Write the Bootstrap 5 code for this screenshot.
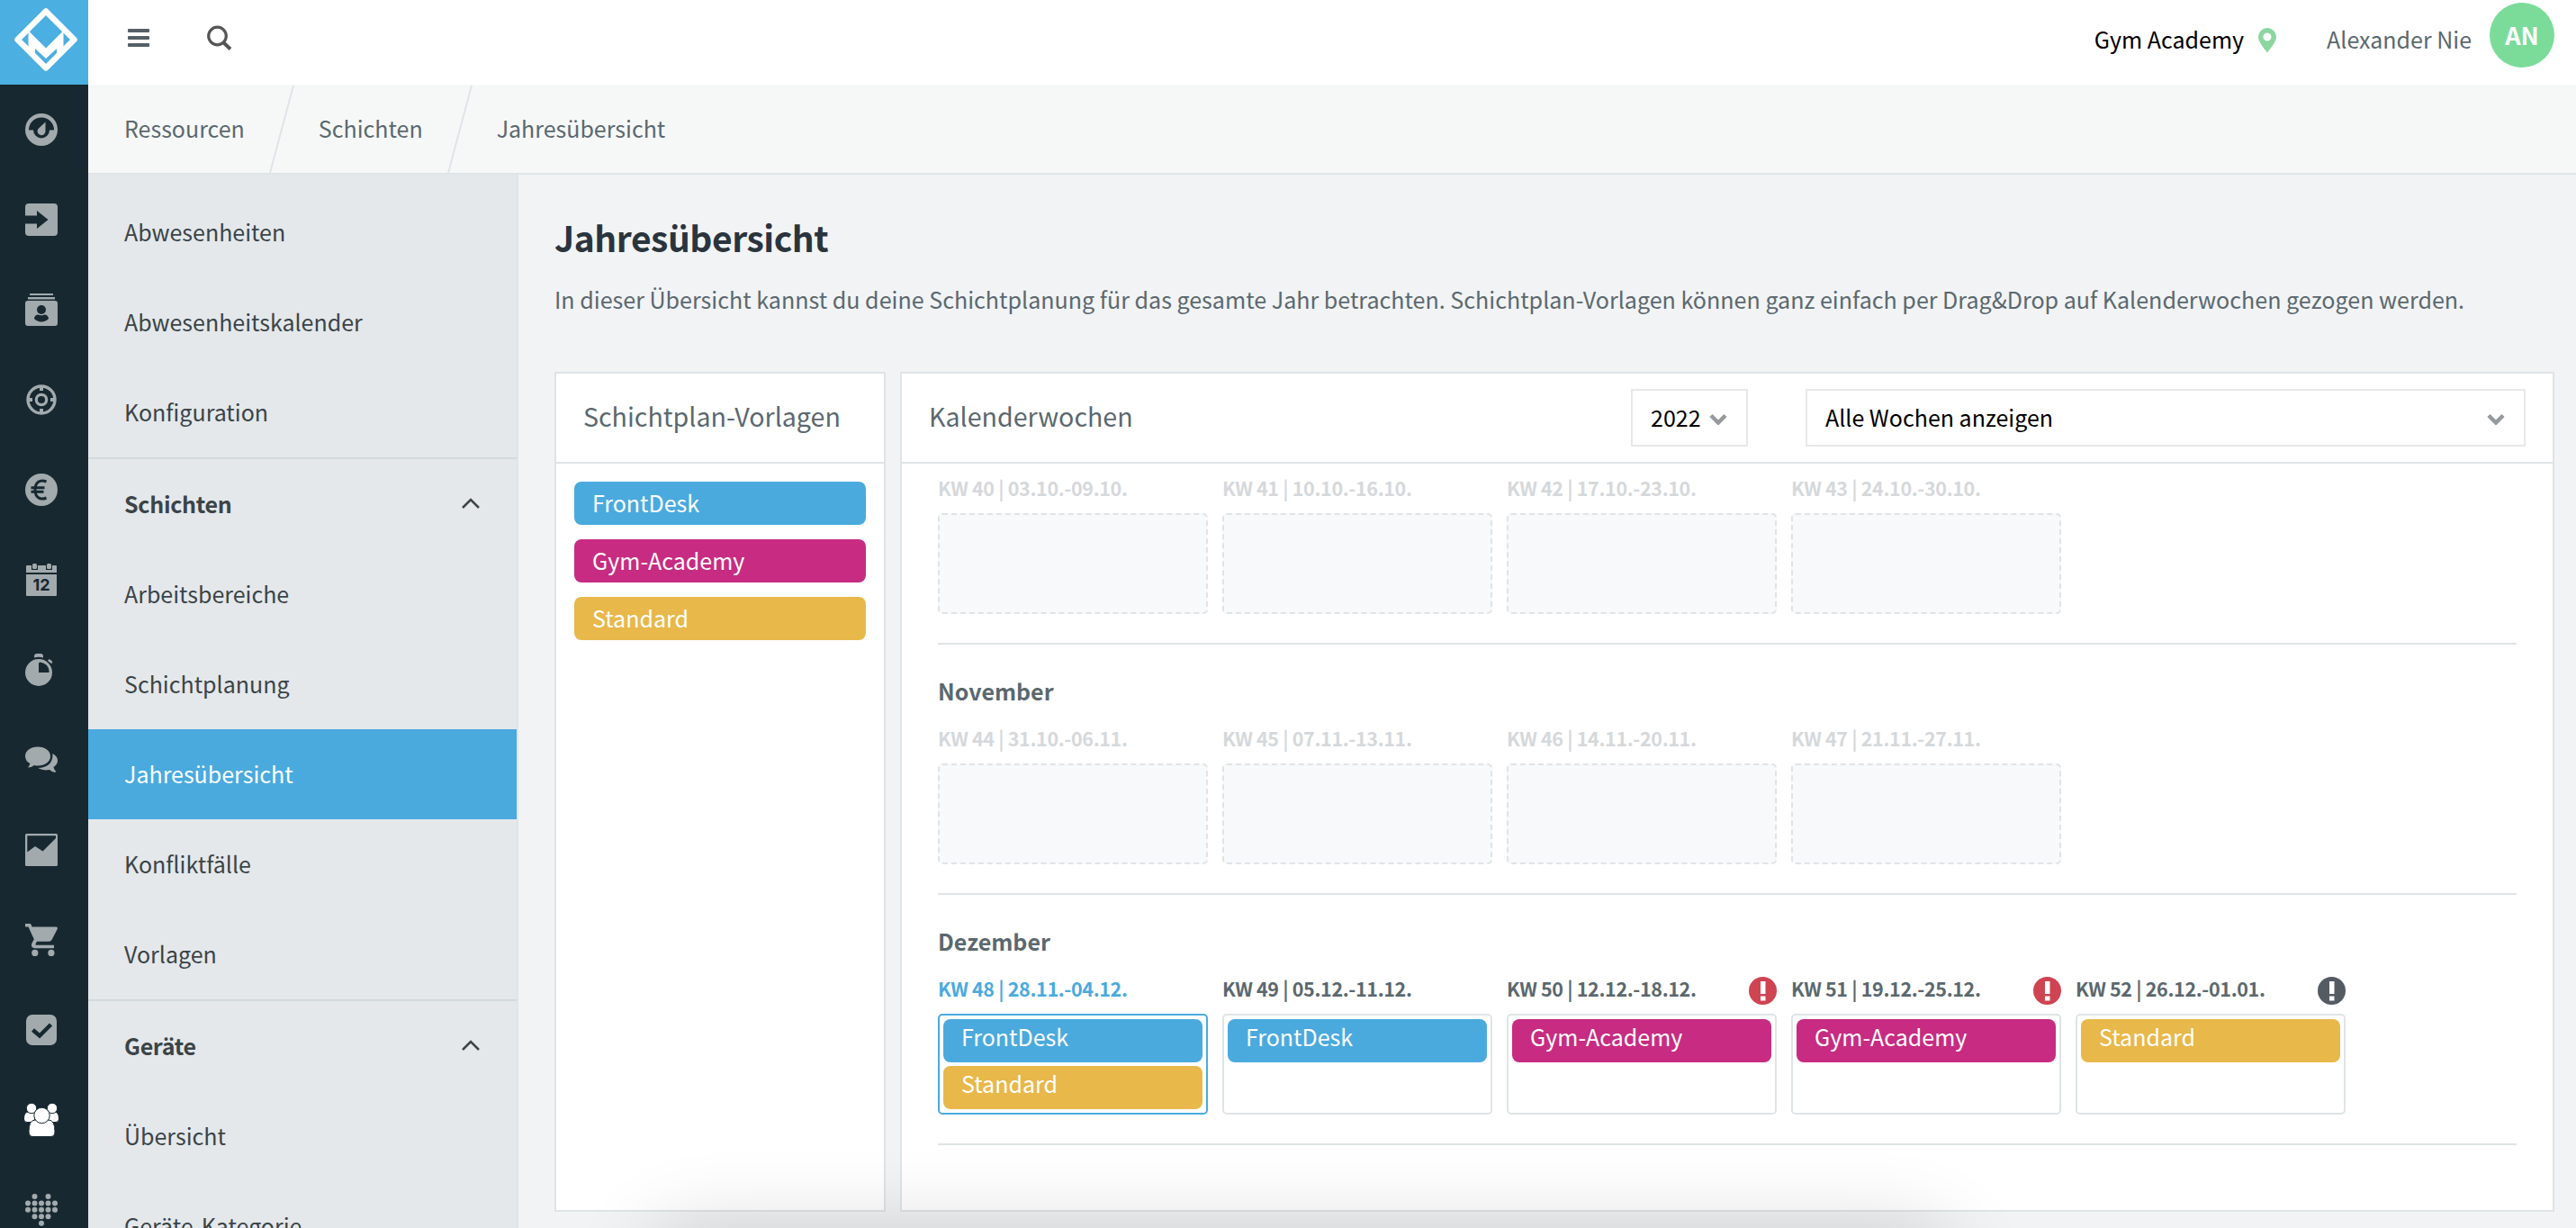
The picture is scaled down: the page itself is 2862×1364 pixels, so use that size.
<!DOCTYPE html>
<html lang="de">
<head>
  <meta charset="UTF-8">
  <meta name="viewport" content="width=device-width, initial-scale=1.0">
  <title>Jahresübersicht</title>
  <link rel="stylesheet" href="https://cdn.jsdelivr.net/npm/bootstrap@5.3.3/dist/css/bootstrap.min.css">
  <style>
    body {
      background: #f1f3f5;
      color: #5b686e;
      font-family: "Noto Sans CJK SC", "Noto Sans", sans-serif;
      font-size: 25px;
      line-height: 40px;
      height: 1364px;
      overflow: hidden;
    }

    a { color: inherit; text-decoration: none; }
    svg { display: block; flex: none; }

    /* dark icon rail */
    .rail { width: 98px; background: #172830; }
    .rail-logo { height: 94px; background: #4cafe1; padding: 8px 0 0 15px; }
    .rail a { height: 100px; padding-right: 6px; color: #a2aaad; flex: none; }
    .rail a.current { color: #fff; }

    /* top bar */
    .topbar { height: 94px; padding: 0 24px 0 44px; background: #fff; }
    .menu-icon { margin-top: 32px; }
    .search-icon { margin: 28px 0 0 64px; }
    .studio { margin-top: 23px; color: #000; }
    .pin { margin: 31px 56px 0 16px; }
    .user { margin: 23px 20px 0 0; }
    .avatar { width: 72px; height: 72px; margin-top: 3px; padding-bottom: 1px; background: #7bdc9a; color: #fff; font-size: 27px; }

    .crumbs { height: 100px; background: #f6f8f8; border-bottom: 2px solid #dfe5e7; padding-left: 40px; }
    .crumbs a { padding-bottom: 2px; }

    .content-row { min-height: 0; }

    /* section menu */
    .side { width: 478px; background: #e4e8eb; border-right: 2px solid #dfe4e7; padding-top: 14px; color: #3b4447; }
    .side a { height: 100px; padding: 0 41px 2px 40px; flex: none; }
    .side a.head { height: 102px; border-top: 2px solid #d2dade; font-weight: 700; letter-spacing: -.3px; }
    .side a.current { background: #4aaade; color: #fff; }

    .page { padding: 47px 24px 18px 40px; }
    .page h1 { font-size: 39px; line-height: 44px; letter-spacing: -.45px; color: #2a343d; margin: 0; font-weight: 700; }
    .intro { margin: 29px 0 63px; font-size: 25.070px; line-height: 36px; white-space: nowrap; }

    .boards { min-height: 0; }
    .panel { background: #fff; border: 2px solid #dfe4e6; }
    .panel-top { height: 100px; border-bottom: 2px solid #dfe4e6; padding: 0 30px 0 30px; }
    .panel-title { font-size: 28.600px; padding-bottom: 5px; }
    .templates { width: 368px; }
    .templates .pills { padding: 20px; gap: 16px; }

    .pill { height: 48px; line-height: 46px; border-radius: 8px; padding-left: 20px; color: #fff; }
    .pill-blue { background: #4aaade; }
    .pill-pink { background: #c72c82; }
    .pill-gold { background: #e8b84a; }

    .picker { height: 64px; border: 2px solid #e8e8e8; color: #000; padding: 0 21px 2px 20px; }
    .picker svg { margin-top: 4px; }
    .picker-year { width: 130px; margin-right: 64px; }
    .picker-weeks { width: 800px; }

    .months { padding: 0 40px; }
    .month { height: 278px; border-bottom: 2px solid #dfe4e6; padding-top: 33px; }
    .month-first { height: 201px; padding-top: 11px; }
    .month h2 { font-size: 25px; line-height: 36px; margin: 0 0 19px; font-weight: 700; }
    .week { width: 300px; }
    .week-name { height: 36px; line-height: 32px; font-size: 21.500px; font-weight: 700; letter-spacing: -.350px; padding-bottom: 4px; margin-bottom: 8px; white-space: nowrap; }
    .week-name svg { margin-top: 5px; }
    .slot { height: 112px; border: 2px solid #dfe4e6; border-radius: 5px; padding: 4px; gap: 4px; }
    .slot .pill { line-height: 38px; }
    .past .week-name { color: #d5d8db; }
    .past .slot { border-style: dashed; background: #f8f9fb; }
    .now .week-name { color: #4aaade; }
    .now .slot { border-color: #4aaade; }

    .dock-shadow {
      position: absolute; left: 740px; top: 1384px; width: 1410px; height: 60px; border-radius: 30px;
      box-shadow: 0 0 90px 20px rgba(0, 0, 0, .16);
    }
  </style>
</head>
<body class="d-flex position-relative">

  <!-- icon rail -->
  <nav class="rail d-flex flex-column flex-shrink-0 overflow-hidden">
    <div class="rail-logo flex-shrink-0">
      <svg width="72" height="72" viewBox="0 0 72 72">
        <path d="M36 4.500 67.500 36 36 67.500 4.500 36Z" fill="none" stroke="#fff" stroke-width="6.500" stroke-linejoin="round"/>
        <path d="M16.500 26 36 45.500 55.500 26V48L48 55V46L36 57 24 46V55L16.500 48Z" fill="#fff"/>
      </svg>
    </div>
    <a href="#" class="d-flex align-items-center justify-content-center">
      <svg width="36" height="36" viewBox="0 0 36 36">
        <circle cx="18" cy="18" r="18" fill="currentColor"/>
        <path d="M4 18.500a14 14 0 0 1 28 0h-5a9 9 0 0 1-18 0Z" fill="#172830"/>
        <path d="M22.500 9.500V19a4.500 4.500 0 1 1-8-2Z" fill="currentColor"/>
      </svg>
    </a>
    <a href="#" class="d-flex align-items-center justify-content-center">
      <svg width="36" height="36" viewBox="0 0 36 36">
        <rect width="36" height="36" rx="4" fill="currentColor"/>
        <path d="M0 13.500H13V8L25.500 18 13 28V22.500H0Z" fill="#172830"/>
      </svg>
    </a>
    <a href="#" class="d-flex align-items-center justify-content-center">
      <svg width="36" height="36" viewBox="0 0 36 36">
        <path d="M5 0h26v2H5zM3 4h30v2.500H3z" fill="currentColor"/>
        <rect y="8" width="36" height="28" rx="3" fill="currentColor"/>
        <circle cx="18" cy="18" r="5" fill="#172830"/>
        <path d="M10 28c0-2.500 2-4.500 4.500-4.500 1.500 1 5.500 1 7 0 2.500 0 4.500 2 4.500 4.500-4 4.500-12 4.500-16 0Z" fill="#172830"/>
      </svg>
    </a>
    <a href="#" class="d-flex align-items-center justify-content-center">
      <svg width="34" height="34" viewBox="0 0 34 34" fill="none" stroke="currentColor">
        <circle cx="17" cy="17" r="15" stroke-width="3.400"/>
        <circle cx="17" cy="17" r="5.700" stroke-width="3.200"/>
        <path d="M17 2v5M17 27v5M2 17h5M27 17h5" stroke-width="4"/>
      </svg>
    </a>
    <a href="#" class="d-flex align-items-center justify-content-center">
      <svg width="36" height="36" viewBox="0 0 36 36">
        <circle cx="18" cy="18" r="18" fill="currentColor"/>
        <path d="M23.500 9c-7-3-12.500.5-12.500 9s5.500 12 12.500 9M6.500 15.800H21.500M6.500 20.200H20.500" fill="none" stroke="#172830" stroke-width="3"/>
      </svg>
    </a>
    <a href="#" class="d-flex align-items-center justify-content-center">
      <svg width="34" height="38" viewBox="0 0 34 38">
        <path d="M1 3h5v5h7V3h9v5h7V3h4q1 0 1 1v7H0V4q0-1 1-1ZM0 13h34v23q0 1-1 1H1q-1 0-1-1Z" fill="currentColor"/>
        <rect x="7" y="1" width="5" height="6" rx="1.500" fill="currentColor"/>
        <rect x="23" y="1" width="5" height="6" rx="1.500" fill="currentColor"/>
        <text x="17" y="31" text-anchor="middle" font-family="Inter, sans-serif" font-size="18" font-weight="700" fill="#172830">12</text>
      </svg>
    </a>
    <a href="#" class="d-flex align-items-center justify-content-center">
      <svg width="36" height="36" viewBox="0 0 36 36">
        <circle cx="15" cy="21" r="15" fill="currentColor"/>
        <path d="M10 4.500V3q0-3 3-3h4q3 0 3 3v1.500q-5-1.500-10 0ZM25 8l1.500-2q3.500 1.500 4 4L29 11Z" fill="currentColor"/>
        <path d="M15 21V11q0-1.500 1.500-1.500Q26 11 26.700 20q0 1-1 1Z" fill="#172830"/>
      </svg>
    </a>
    <a href="#" class="d-flex align-items-center justify-content-center">
      <svg width="36" height="30" viewBox="0 0 36 30" fill="currentColor">
        <path d="M14 .5c8 0 14 4.500 14 10.500S22 21.500 14 21.500q-2 0-4-.5-3 2.500-7 2.500 2-2 2.300-4.500Q0 16 0 11C0 5 6 .5 14 .5Z"/>
        <path d="M30.500 8q5.500 3 5.500 8 0 4-4.500 7 .5 3 2.500 4.500l-.5 1.500q-4-.5-6.500-3-7 1.500-13-2Q31 23.500 30.500 8Z"/>
      </svg>
    </a>
    <a href="#" class="d-flex align-items-center justify-content-center">
      <svg width="36" height="36" viewBox="0 0 36 36">
        <rect width="36" height="36" rx="1.500" fill="currentColor"/>
        <path d="M2.300 2.300H34V5L19.500 19.500 11 14 2.300 20.500Z" fill="#172830"/>
      </svg>
    </a>
    <a href="#" class="d-flex align-items-center justify-content-center">
      <svg width="36" height="36" viewBox="0 0 36 36" fill="currentColor">
        <path d="M0 0h6l1.700 3.500H34.500q2 .5 1.200 2.500L29.500 18q-1 1.800-3 1.800H13l-1.600 3q0 .9.900.9H32v3.500H10.500q-5-1-3-5.700l2.300-4.300L3.500 3.500H0Z"/>
        <circle cx="10.800" cy="32.400" r="3.600"/>
        <circle cx="28.900" cy="32.400" r="3.600"/>
      </svg>
    </a>
    <a href="#" class="d-flex align-items-center justify-content-center">
      <svg width="34" height="34" viewBox="0 0 34 34">
        <rect width="34" height="34" rx="7" fill="currentColor"/>
        <path d="M7.500 17 15 23.500 27.500 11" fill="none" stroke="#172830" stroke-width="4.500"/>
      </svg>
    </a>
    <a href="#" class="current d-flex align-items-center justify-content-center">
      <svg width="38" height="38" viewBox="0 0 38 38" fill="currentColor" stroke="#172830" stroke-width="1">
        <path d="M-.5 18q0-8 5-8h7v11.500H3q-3.500 0-3.500-3.500ZM38.500 18q0-8-5-8h-7v11.500H35q3.500 0 3.500-3.500Z"/>
        <circle cx="8" cy="6" r="5.700"/>
        <circle cx="31" cy="6" r="5.700"/>
        <path d="M5 32q0-13 7-13h15q7 0 7 13 0 5.500-5 5.500H10q-5 0-5-5.500Z"/>
        <circle cx="19.500" cy="14" r="8.700"/>
      </svg>
    </a>
    <a href="#" class="d-flex align-items-center justify-content-center">
      <svg width="36" height="36" viewBox="0 0 36 36" fill="none" stroke="currentColor" stroke-width="6" stroke-linecap="round">
        <path d="M10.500 3h.01M25.500 3h.01M3 10.500h.01M10.500 10.500h.01M18 10.500h.01M25.500 10.500h.01M33 10.500h.01M3 17.800h.01M10.500 17.800h.01M18 17.800h.01M25.500 17.800h.01M33 17.800h.01M10.500 25.200h.01M18 25.200h.01M25.500 25.200h.01M18 32.700h.01"/>
      </svg>
    </a>
  </nav>

  <div class="flex-grow-1 d-flex flex-column">
    <header class="topbar d-flex align-items-start flex-shrink-0">
      <svg class="menu-icon" width="24" height="20" viewBox="0 0 24 20" fill="#555f66">
        <rect width="24" height="4" rx="1"/><rect y="8" width="24" height="4" rx="1"/><rect y="16" width="24" height="4" rx="1"/>
      </svg>
      <svg class="search-icon" width="28" height="28" viewBox="0 0 28 28" fill="none" stroke="#555">
        <circle cx="11.500" cy="12" r="9.800" stroke-width="3.200"/>
        <path d="M18 19 26 26.500" stroke-width="4"/>
      </svg>
      <div class="studio ms-auto">Gym Academy</div>
      <svg class="pin" width="20" height="28" viewBox="0 0 20 28">
        <path fill-rule="evenodd" d="M10 0a10 10 0 0 1 10 10c0 5-5 11-10 17.500C5 21 0 15 0 10A10 10 0 0 1 10 0Zm0 5.500a4.500 4.500 0 1 0 0 9 4.500 4.500 0 0 0 0-9Z" fill="#8cd6a2"/>
      </svg>
      <div class="user">Alexander Nie</div>
      <div class="avatar rounded-circle d-flex align-items-center justify-content-center fw-bold">AN</div>
    </header>

    <nav class="crumbs d-flex align-items-center flex-shrink-0">
      <a href="#">Ressourcen</a>
      <svg width="82" height="98" viewBox="0 0 82 98"><path d="M54 1 28 98" stroke="#dfe4e8" stroke-width="2"/></svg>
      <a href="#">Schichten</a>
      <svg width="82" height="98" viewBox="0 0 82 98"><path d="M54 1 28 98" stroke="#dfe4e8" stroke-width="2"/></svg>
      <a href="#">Jahresübersicht</a>
    </nav>

    <div class="content-row d-flex flex-grow-1">
      <aside class="side d-flex flex-column flex-shrink-0 overflow-hidden">
        <a href="#" class="d-flex align-items-center">Abwesenheiten</a>
        <a href="#" class="d-flex align-items-center">Abwesenheitskalender</a>
        <a href="#" class="d-flex align-items-center">Konfiguration</a>
        <a href="#" class="head d-flex align-items-center justify-content-between">Schichten
          <svg width="20" height="12" viewBox="0 0 20 12"><path d="M1 11 10 2 19 11" fill="none" stroke="#3b4447" stroke-width="2.500"/></svg>
        </a>
        <a href="#" class="d-flex align-items-center">Arbeitsbereiche</a>
        <a href="#" class="d-flex align-items-center">Schichtplanung</a>
        <a href="#" class="current d-flex align-items-center">Jahresübersicht</a>
        <a href="#" class="d-flex align-items-center">Konfliktfälle</a>
        <a href="#" class="d-flex align-items-center">Vorlagen</a>
        <a href="#" class="head d-flex align-items-center justify-content-between">Geräte
          <svg width="20" height="12" viewBox="0 0 20 12"><path d="M1 11 10 2 19 11" fill="none" stroke="#3b4447" stroke-width="2.500"/></svg>
        </a>
        <a href="#" class="d-flex align-items-center">Übersicht</a>
        <a href="#" class="d-flex align-items-center">Geräte-Kategorie</a>
      </aside>

      <main class="page flex-grow-1 d-flex flex-column">
        <h1>Jahresübersicht</h1>
        <p class="intro">In dieser Übersicht kannst du deine Schichtplanung für das gesamte Jahr betrachten. Schichtplan-Vorlagen können ganz einfach per Drag&amp;Drop auf Kalenderwochen gezogen werden.</p>

        <div class="boards d-flex gap-3 flex-grow-1">
          <section class="panel templates">
            <div class="panel-top d-flex align-items-center"><span class="panel-title">Schichtplan-Vorlagen</span></div>
            <div class="pills d-flex flex-column">
              <div class="pill pill-blue">FrontDesk</div>
              <div class="pill pill-pink">Gym-Academy</div>
              <div class="pill pill-gold">Standard</div>
            </div>
          </section>

          <section class="panel flex-grow-1">
            <div class="panel-top d-flex align-items-center">
              <span class="panel-title me-auto">Kalenderwochen</span>
              <div class="picker picker-year d-flex align-items-center justify-content-between">2022
                <svg width="20" height="13" viewBox="0 0 20 13"><path d="M2 2.500 10 10.500 18 2.500" fill="none" stroke="#969a9e" stroke-width="4.500"/></svg>
              </div>
              <div class="picker picker-weeks d-flex align-items-center justify-content-between">Alle Wochen anzeigen
                <svg width="20" height="13" viewBox="0 0 20 13"><path d="M2 2.500 10 10.500 18 2.500" fill="none" stroke="#969a9e" stroke-width="4.500"/></svg>
              </div>
            </div>

            <div class="months">
              <div class="month month-first past d-flex gap-3">
                <div class="week"><div class="week-name">KW 40 | 03.10.-09.10.</div><div class="slot"></div></div>
                <div class="week"><div class="week-name">KW 41 | 10.10.-16.10.</div><div class="slot"></div></div>
                <div class="week"><div class="week-name">KW 42 | 17.10.-23.10.</div><div class="slot"></div></div>
                <div class="week"><div class="week-name">KW 43 | 24.10.-30.10.</div><div class="slot"></div></div>
              </div>

              <div class="month">
                <h2>November</h2>
                <div class="past d-flex gap-3">
                  <div class="week"><div class="week-name">KW 44 | 31.10.-06.11.</div><div class="slot"></div></div>
                  <div class="week"><div class="week-name">KW 45 | 07.11.-13.11.</div><div class="slot"></div></div>
                  <div class="week"><div class="week-name">KW 46 | 14.11.-20.11.</div><div class="slot"></div></div>
                  <div class="week"><div class="week-name">KW 47 | 21.11.-27.11.</div><div class="slot"></div></div>
                </div>
              </div>

              <div class="month">
                <h2>Dezember</h2>
                <div class="d-flex gap-3">
                  <div class="week now">
                    <div class="week-name">KW 48 | 28.11.-04.12.</div>
                    <div class="slot d-flex flex-column">
                      <div class="pill pill-blue">FrontDesk</div>
                      <div class="pill pill-gold">Standard</div>
                    </div>
                  </div>
                  <div class="week">
                    <div class="week-name">KW 49 | 05.12.-11.12.</div>
                    <div class="slot"><div class="pill pill-blue">FrontDesk</div></div>
                  </div>
                  <div class="week">
                    <div class="week-name d-flex align-items-center justify-content-between">KW 50 | 12.12.-18.12.
                      <svg width="31" height="31" viewBox="0 0 31 31"><circle cx="15.500" cy="15.500" r="15.500" fill="#cf4452"/><path d="M13 5h5.500v14H13zM13 21.500h5.500v5H13z" fill="#fff"/></svg>
                    </div>
                    <div class="slot"><div class="pill pill-pink">Gym-Academy</div></div>
                  </div>
                  <div class="week">
                    <div class="week-name d-flex align-items-center justify-content-between">KW 51 | 19.12.-25.12.
                      <svg width="31" height="31" viewBox="0 0 31 31"><circle cx="15.500" cy="15.500" r="15.500" fill="#cf4452"/><path d="M13 5h5.500v14H13zM13 21.500h5.500v5H13z" fill="#fff"/></svg>
                    </div>
                    <div class="slot"><div class="pill pill-pink">Gym-Academy</div></div>
                  </div>
                  <div class="week">
                    <div class="week-name d-flex align-items-center justify-content-between">KW 52 | 26.12.-01.01.
                      <svg width="31" height="31" viewBox="0 0 31 31"><circle cx="15.500" cy="15.500" r="15.500" fill="#545b63"/><path d="M13 5h5.500v14H13zM13 21.500h5.500v5H13z" fill="#fff"/></svg>
                    </div>
                    <div class="slot"><div class="pill pill-gold">Standard</div></div>
                  </div>
                </div>
              </div>
            </div>
          </section>
        </div>
      </main>
    </div>
  </div>

  <div class="dock-shadow"></div>

  <script src="https://cdn.jsdelivr.net/npm/bootstrap@5.3.3/dist/js/bootstrap.bundle.min.js"></script>
</body>
</html>
